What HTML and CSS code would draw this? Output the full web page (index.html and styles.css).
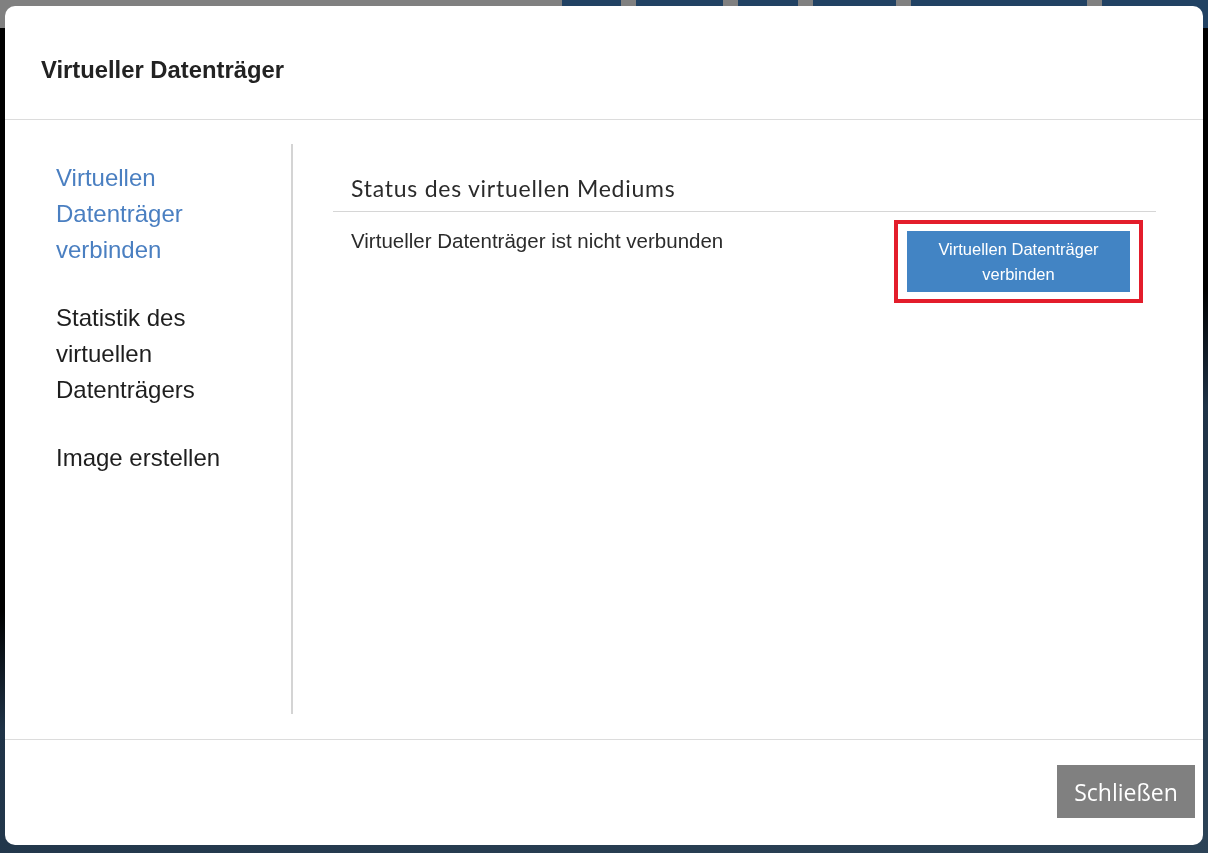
FILE: index.html
```html
<!DOCTYPE html>
<html lang="de">
<head>
  <meta charset="UTF-8" />
  <title>Virtueller Datenträger</title>
  <link rel="stylesheet" href="styles.css">
</head>
<body>
  <div class="topbar">
    <span class="tab t1"></span>
    <span class="tab t2"></span>
    <span class="tab t3"></span>
    <span class="tab t4"></span>
    <span class="tab t5"></span>
    <span class="tab t6"></span>
  </div>

  <div class="modal">
    <div class="modal-header">
      <h1>Virtueller Datenträger</h1>
    </div>

    <div class="modal-body">
      <nav class="sidenav">
        <a class="active">Virtuellen Datenträger verbinden</a>
        <a>Statistik des virtuellen Datenträgers</a>
        <a>Image erstellen</a>
      </nav>
      <div class="panel">
        <h2>Status des virtuellen Mediums</h2>
        <div class="status-row">
          <span class="status-text">Virtueller Datenträger ist nicht verbunden</span>
          <div class="highlight">
            <button class="btn-primary">Virtuellen Datenträger<br>verbinden</button>
          </div>
        </div>
      </div>
    </div>

    <div class="modal-footer">
      <button class="btn-close">Schließen</button>
    </div>
  </div>
</body>
</html>
```

FILE: styles.css
```css
html, body {
  margin: 0;
  padding: 0;
  height: 100%;
}
body {
  background: linear-gradient(165deg, #000 0%, #000 52%, #1f3347 62%, #2c4357 100%);
  font-family: "Liberation Sans", Arial, sans-serif;
  overflow: hidden;
}
.topbar {
  height: 28px;
  background: #808080;
  display: flex;
}
.tab {
  display: block;
  height: 28px;
  background: #214263;
}
.t1 { margin-left: 562px; width: 59px; }
.t2 { margin-left: 15px; width: 87px; }
.t3 { margin-left: 15px; width: 60px; }
.t4 { margin-left: 15px; width: 83px; }
.t5 { margin-left: 15px; width: 176px; }
.t6 { margin-left: 15px; flex: 1; }

/* dialog sits over the page */
.modal {
  position: fixed;
  top: 6px;
  left: 5px;
  right: 5px;
  bottom: 8px;
  background: #fff;
  border-radius: 10px;
  display: flex;
  flex-direction: column;
  overflow: hidden;
}
.modal-header {
  height: 114px;
  border-bottom: 1px solid #dcdcdc;
  display: flex;
  align-items: center;
  padding: 0 36px;
  box-sizing: border-box;
  flex-shrink: 0;
}
.modal-header h1 {
  margin: 0;
  font-size: 23.8px;
  font-weight: bold;
  color: #222;
  padding-top: 14px;
}
.modal-body {
  flex: 1;
  display: flex;
  padding: 24px 0 25px 0;
  border-bottom: 1px solid #dcdcdc;
}
.sidenav {
  width: 288px;
  box-sizing: border-box;
  padding: 16px 0 0 51px;
  border-right: 2px solid #d4d4d4;
  display: flex;
  flex-direction: column;
  gap: 32px;
}
.sidenav a {
  display: block;
  width: 200px;
  font-size: 24px;
  line-height: 36px;
  color: #1e1e1e;
  cursor: pointer;
}
.sidenav a.active {
  color: #4a7fc1;
}
.panel {
  flex: 1;
  padding: 0 47px 0 40px;
}
.panel h2 {
  margin: 0;
  padding: 29px 0 8px 18px;
  font-family: Lato, sans-serif;
  font-weight: normal;
  font-size: 23px;
  letter-spacing: 0.75px;
  line-height: 30px;
  color: #2b2b2b;
  border-bottom: 1px solid #d6d6d6;
}
.status-row {
  display: flex;
  justify-content: space-between;
  align-items: flex-start;
  padding: 8px 13px 0 18px;
}
.status-text {
  font-size: 20.5px;
  line-height: 24px;
  color: #2b2b2b;
  padding-top: 9px;
}
.highlight {
  border: 4px solid #e31d2b;
  padding: 7px 9px;
}
.btn-primary {
  display: block;
  width: 223px;
  height: 61px;
  background: #4284c4;
  color: #fff;
  border: none;
  font-family: "Liberation Sans", Arial, sans-serif;
  font-size: 16.5px;
  line-height: 25px;
  padding: 0;
  cursor: pointer;
}
.modal-footer {
  height: 105px;
  display: flex;
  justify-content: flex-end;
  align-items: flex-start;
  padding: 25px 8px 0 0;
  box-sizing: border-box;
  flex-shrink: 0;
}
.btn-close {
  width: 138px;
  height: 53px;
  background: #808080;
  color: #fff;
  border: none;
  font-family: "Open Sans", sans-serif;
  font-size: 23px;
  padding: 0;
  cursor: pointer;
}
```
